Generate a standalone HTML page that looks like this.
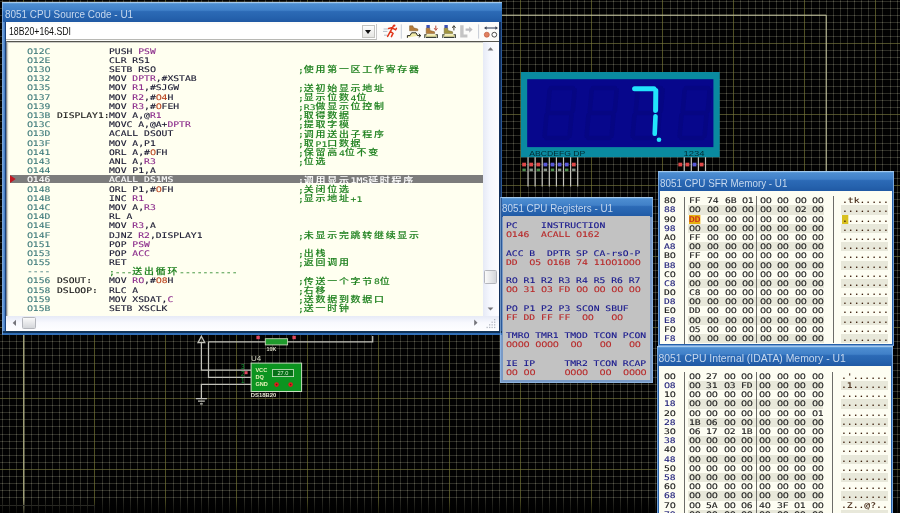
<!DOCTYPE html>
<html lang="zh-CN">
<head>
<meta charset="utf-8">
<title>8051 CPU Source Code - U1</title>
<style>
html,body{margin:0;padding:0;background:#000;}
body{width:900px;height:513px;overflow:hidden;position:relative;font-family:"Liberation Sans","Noto Sans CJK SC",sans-serif;}
#scr{position:absolute;left:0;top:0;width:900px;height:513px;overflow:hidden;}
svg.bg,svg.ov{position:absolute;left:0;top:0;}
svg.ov{z-index:8;}
.win{position:absolute;box-sizing:border-box;background:#2560aa;}
.win:before{content:"";position:absolute;left:0;top:0;right:0;bottom:0;border:0.9px solid rgba(150,190,236,0.7);border-top-color:rgba(170,205,240,0.85);z-index:5;box-sizing:border-box;}
.tb{position:absolute;left:0;right:0;top:0;height:20px;background:linear-gradient(#9cc0e8 0,#62a0da 1.2px,#4c8cd0 2.4px,#4080c8 8.2px,#2c6ab6 9.6px,#2663ae 15px,#2059a4 20px);color:#c6d8ee;font-size:10.4px;line-height:20px;white-space:nowrap;overflow:hidden;}
.tb span{position:absolute;left:2.8px;top:2.7px;transform:scaleX(0.947);transform-origin:0 50%;}
.mono,.ln,.rl,.rv,.mr{font-family:"DejaVu Sans Mono","Liberation Mono","Noto Sans CJK SC",monospace;font-size:7.7px;}
.ln span,.rl,.rv,.mr span{transform:scaleX(1.262);transform-origin:0 50%;-webkit-text-stroke:0.12px currentColor;}
s{font-family:"DejaVu Sans","Liberation Sans",sans-serif;letter-spacing:-0.26px;text-decoration:none;}
/* source window */
#src{left:2px;top:2px;width:499.5px;height:333px;z-index:4;background:linear-gradient(90deg,#2a62ac,#6496d6 1.6px,#3a72bc 3px,#1a4078 3.3px,#1a4078 4.2px,#2e66b0 4.3px,#2e66b0 496px,#c0d4ee 496.9px,#12305c 497.5px,#12305c 498.9px,#2c5a9a 499.5px);}
#src:before{border-right-color:transparent;border-bottom-color:transparent;}
#src:after{content:"";position:absolute;left:0;right:0;bottom:0;height:3.8px;background:linear-gradient(#b8cce6,#123458 0.5px,#123458 2px,#2e6cb6 2.4px,#3674bc);}
#src .tool{position:absolute;left:4px;right:2.4px;top:20px;height:19.6px;background:#fcfcfa;}
#src .combo{position:absolute;left:0;top:1.6px;width:370.4px;height:15.6px;background:#fff;border-bottom:1px solid #b8b8b4;border-right:1px solid #c8c8c8;font-size:10.4px;line-height:16.4px;color:#101010;}
#src .combo span{position:absolute;left:3.4px;top:0;font-size:10.2px;transform:scaleX(0.858);transform-origin:0 50%;}
#src .cbtn{position:absolute;right:1px;top:1.4px;width:13.4px;height:13.4px;background:linear-gradient(#fdfdfd,#e6e6e2);border:1px solid #c4c4c0;box-sizing:border-box;}
#src .cbtn:after{content:"";position:absolute;left:2.2px;top:4.2px;border-left:3.6px solid transparent;border-right:3.6px solid transparent;border-top:4px solid #111;}
#src .codebox{position:absolute;left:4px;top:39.4px;width:476.6px;height:274.8px;background:#fffff0;border-top:1px solid #55554f;border-left:1.5px solid #80848c;box-shadow:inset 1.2px 1px 0 #cdcdc6;box-sizing:border-box;overflow:hidden;}
#code{position:absolute;left:-7.5px;top:-42.4px;width:900px;height:513px;}
.ln{position:absolute;left:0;width:900px;height:9.18px;line-height:9.18px;white-space:pre;color:#16162e;}
.ln span{position:absolute;top:0;}
.ln .a{color:#3e7a7a;}
.ln .l{color:#141414;}
.ln .c{color:#1e801e;}
.ln .c b{position:relative;top:-0.8px;font-weight:500;font-size:7.9px;letter-spacing:1.37px;font-family:"Noto Sans CJK SC","WenQuanYi Zen Hei",sans-serif;}
.ln i{font-style:normal;}
.ln i.r{color:#8a2a8a;}
.ln i.n{color:#b8421c;}
.ln.hl{color:#fff;}
.hlbg{position:absolute;left:10px;top:174.7px;width:480px;height:8.6px;background:#7c7c7c;}
.ln.hl span,.ln.hl .a,.ln.hl .c{color:#fff;}
.mark{position:absolute;left:10px;top:175.3px;width:0;height:0;border-top:3.8px solid transparent;border-bottom:3.8px solid transparent;border-left:5.6px solid #c01822;}
#src .vs{position:absolute;left:480.6px;top:39.4px;width:16.6px;height:274.8px;border-top:1px solid #55554f;box-sizing:border-box;background:linear-gradient(90deg,#e6eaf6,#f6f8fe 45%,#fdfdff);}
#src .hs{position:absolute;left:4px;top:314.2px;width:492.8px;height:15.1px;background:linear-gradient(#e6eaf6,#f8f9fe 45%,#fefeff);}
.thumb{position:absolute;background:linear-gradient(90deg,#fafafa,#d4d6da);border:1px solid #b4b6bc;box-sizing:border-box;border-radius:1.5px;}
.arr{position:absolute;width:0;height:0;}
/* registers */
#reg{left:500.2px;top:196.8px;width:152.6px;height:185.8px;}
#reg{background:#7a9ac6;}
#reg .body{position:absolute;left:2.6px;right:2.6px;top:19.6px;bottom:2.6px;background:#c2c2c2;}
.rl,.rv{position:absolute;left:505.7px;height:9.18px;line-height:9.18px;white-space:pre;}
.rl{color:#16168c;}
.rv{color:#b82828;}
/* memory */
#sfr{left:658.2px;top:171.3px;width:236px;height:175px;}
#ida{left:657.3px;top:346.3px;width:235.9px;height:180px;}
.mbody{position:absolute;left:2.2px;right:2.5px;top:19.8px;bottom:2.6px;background:#fdfdf2;}
.mr{position:absolute;left:0;width:900px;height:9.19px;line-height:9.19px;white-space:pre;color:#1a1a1a;}
.mr span{position:absolute;top:0;}
.mr u{position:absolute;top:0;height:9.19px;background:#e8e8da;text-decoration:none;}
.mr .ad{color:#141414;}
.mr.o .ad{color:#1c1c78;}
.mr .as{color:#3a1c08;}
.mr .hb{background:#e6b010;color:#c82020;}
.mr em{font-style:normal;background:#d8c020;}
.vl{position:absolute;width:1px;background:#6c6c68;z-index:3;}
</style>
</head>
<body>
<div id="scr">
<svg class="bg" width="900" height="513" viewBox="0 0 900 513">
<rect width="900" height="513" fill="#020202"/>
<path d="M2.5 0V513M9.5 0V513M16.5 0V513M31.5 0V513M38.5 0V513M45.5 0V513M52.5 0V513M59.5 0V513M66.5 0V513M73.5 0V513M80.5 0V513M87.5 0V513M102.5 0V513M109.5 0V513M116.5 0V513M123.5 0V513M130.5 0V513M137.5 0V513M144.5 0V513M151.5 0V513M158.5 0V513M173.5 0V513M180.5 0V513M187.5 0V513M194.5 0V513M201.5 0V513M208.5 0V513M215.5 0V513M222.5 0V513M229.5 0V513M244.5 0V513M251.5 0V513M258.5 0V513M265.5 0V513M272.5 0V513M279.5 0V513M286.5 0V513M293.5 0V513M300.5 0V513M314.5 0V513M322.5 0V513M329.5 0V513M336.5 0V513M343.5 0V513M350.5 0V513M357.5 0V513M364.5 0V513M371.5 0V513M385.5 0V513M393.5 0V513M400.5 0V513M407.5 0V513M414.5 0V513M421.5 0V513M428.5 0V513M435.5 0V513M442.5 0V513M456.5 0V513M464.5 0V513M471.5 0V513M478.5 0V513M485.5 0V513M492.5 0V513M499.5 0V513M506.5 0V513M513.5 0V513M528.5 0V513M535.5 0V513M542.5 0V513M549.5 0V513M556.5 0V513M563.5 0V513M570.5 0V513M577.5 0V513M584.5 0V513M599.5 0V513M606.5 0V513M613.5 0V513M620.5 0V513M627.5 0V513M634.5 0V513M641.5 0V513M648.5 0V513M655.5 0V513M670.5 0V513M677.5 0V513M684.5 0V513M691.5 0V513M698.5 0V513M705.5 0V513M712.5 0V513M719.5 0V513M726.5 0V513M740.5 0V513M748.5 0V513M755.5 0V513M762.5 0V513M769.5 0V513M776.5 0V513M783.5 0V513M790.5 0V513M797.5 0V513M811.5 0V513M819.5 0V513M826.5 0V513M833.5 0V513M840.5 0V513M847.5 0V513M854.5 0V513M861.5 0V513M868.5 0V513M882.5 0V513M890.5 0V513M897.5 0V513" stroke="#6e6e5c" stroke-opacity="0.4" stroke-width="1" fill="none"/>
<path d="M0 1.5H900M0 8.5H900M0 15.5H900M0 22.5H900M0 29.5H900M0 36.5H900M0 50.5H900M0 57.5H900M0 64.5H900M0 72.5H900M0 79.5H900M0 86.5H900M0 93.5H900M0 100.5H900M0 107.5H900M0 121.5H900M0 128.5H900M0 135.5H900M0 143.5H900M0 150.5H900M0 157.5H900M0 164.5H900M0 171.5H900M0 178.5H900M0 192.5H900M0 199.5H900M0 206.5H900M0 213.5H900M0 221.5H900M0 228.5H900M0 235.5H900M0 242.5H900M0 249.5H900M0 263.5H900M0 270.5H900M0 277.5H900M0 285.5H900M0 292.5H900M0 299.5H900M0 306.5H900M0 313.5H900M0 320.5H900M0 334.5H900M0 341.5H900M0 348.5H900M0 355.5H900M0 363.5H900M0 370.5H900M0 377.5H900M0 384.5H900M0 391.5H900M0 405.5H900M0 412.5H900M0 419.5H900M0 426.5H900M0 434.5H900M0 441.5H900M0 448.5H900M0 455.5H900M0 462.5H900M0 476.5H900M0 483.5H900M0 490.5H900M0 497.5H900" stroke="#6e6e5c" stroke-opacity="0.4" stroke-width="1" fill="none" style="mix-blend-mode:plus-lighter"/>
<path d="M23.5 0V513M94.5 0V513M165.5 0V513M236.5 0V513M307.5 0V513M378.5 0V513M449.5 0V513M520.5 0V513M591.5 0V513M662.5 0V513M733.5 0V513M804.5 0V513M875.5 0V513" stroke="#80803a" stroke-opacity="0.62" stroke-width="1" fill="none"/>
<path d="M0 43.5H900M0 114.5H900M0 185.5H900M0 256.5H900M0 327.5H900M0 398.5H900M0 469.5H900" stroke="#7c7c40" stroke-opacity="0.62" stroke-width="1" fill="none"/>
<path d="M23.90 513V15.20H826.20V513" stroke="#d0d0a8" stroke-width="1" fill="none"/>
<path d="M0 505.50H94.50V513" stroke="#3c3c34" stroke-width="1" fill="none"/>
<defs><linearGradient id="fd" x1="0" y1="0" x2="0" y2="1"><stop offset="0" stop-color="#000" stop-opacity="0"/><stop offset="1" stop-color="#000" stop-opacity="0.7"/></linearGradient></defs>
<rect x="0" y="499" width="900" height="14" fill="url(#fd)"/>
<rect x="520.90" y="72.00" width="198.80" height="85.20" fill="#0a8aa0"/>
<rect x="527.2" y="79.2" width="186.2" height="67.9" fill="#07078c"/>
<g transform="translate(548,86) skewX(-5)" fill="none" stroke="#060683" stroke-width="4.5" stroke-linecap="round"><path d="M3 2H25M27 4V25M26 29V50M3 52H24M1 29V50M2 4V25M4 27H24"/></g>
<g transform="translate(590,86) skewX(-5)" fill="none" stroke="#060683" stroke-width="4.5" stroke-linecap="round"><path d="M3 2H25M27 4V25M26 29V50M3 52H24M1 29V50M2 4V25M4 27H24"/></g>
<g transform="translate(636,86) skewX(-5)" fill="none" stroke="#060683" stroke-width="4.5" stroke-linecap="round"><path d="M3 2H25M27 4V25M26 29V50M3 52H24M1 29V50M2 4V25M4 27H24"/></g>
<g transform="translate(683,86) skewX(-5)" fill="none" stroke="#060683" stroke-width="4.5" stroke-linecap="round"><path d="M3 2H25M27 4V25M26 29V50M3 52H24M1 29V50M2 4V25M4 27H24"/></g>
<g fill="none" stroke="#22e4fc" stroke-linecap="round" stroke-linejoin="round"><path d="M634.6 88.7H654" stroke-width="5"/><path d="M655.8 90.5L655.6 110.6" stroke-width="5"/><path d="M655.5 116.2L654.7 133.8" stroke-width="4.6"/></g>
<circle cx="659" cy="139.7" r="2.3" fill="#22e4fc"/>
<text x="529.3" y="155.8" font-family="Liberation Sans, sans-serif" font-size="7.2" fill="#012a30" textLength="56" lengthAdjust="spacingAndGlyphs">ABCDEFG  DP</text>
<text x="683.6" y="155.8" font-family="Liberation Sans, sans-serif" font-size="7.2" fill="#012a30" textLength="21" lengthAdjust="spacingAndGlyphs">1234</text>
<path d="M528.00 157.20V186.40" stroke="#c4c4bc" stroke-width="1.2"/>
<rect x="522.20" y="162.7" width="3.8" height="3.7" fill="#e04848"/>
<rect x="522.40" y="168.6" width="3.4" height="2.6" fill="#6cc86c" opacity="0.7"/>
<path d="M535.10 157.20V186.40" stroke="#c4c4bc" stroke-width="1.2"/>
<rect x="529.30" y="162.7" width="3.8" height="3.7" fill="#e04848"/>
<rect x="529.50" y="168.6" width="3.4" height="2.6" fill="#c0d0c0" opacity="0.7"/>
<path d="M542.20 157.20V186.40" stroke="#c4c4bc" stroke-width="1.2"/>
<rect x="536.40" y="162.7" width="3.8" height="3.7" fill="#e04848"/>
<rect x="536.60" y="168.6" width="3.4" height="2.6" fill="#6cc86c" opacity="0.7"/>
<path d="M549.30 157.20V186.40" stroke="#c4c4bc" stroke-width="1.2"/>
<rect x="543.50" y="162.7" width="3.8" height="3.7" fill="#5858d8"/>
<rect x="543.70" y="168.6" width="3.4" height="2.6" fill="#c0d0c0" opacity="0.7"/>
<path d="M556.40 157.20V186.40" stroke="#c4c4bc" stroke-width="1.2"/>
<rect x="550.60" y="162.7" width="3.8" height="3.7" fill="#5858d8"/>
<rect x="550.80" y="168.6" width="3.4" height="2.6" fill="#6cc86c" opacity="0.7"/>
<path d="M563.50 157.20V186.40" stroke="#c4c4bc" stroke-width="1.2"/>
<rect x="557.70" y="162.7" width="3.8" height="3.7" fill="#5858d8"/>
<rect x="557.90" y="168.6" width="3.4" height="2.6" fill="#c0d0c0" opacity="0.7"/>
<path d="M570.60 157.20V186.40" stroke="#c4c4bc" stroke-width="1.2"/>
<rect x="564.80" y="162.7" width="3.8" height="3.7" fill="#5858d8"/>
<rect x="565.00" y="168.6" width="3.4" height="2.6" fill="#6cc86c" opacity="0.7"/>
<path d="M577.70 157.20V186.40" stroke="#c4c4bc" stroke-width="1.2"/>
<rect x="571.90" y="162.7" width="3.8" height="3.7" fill="#e04848"/>
<rect x="572.10" y="168.6" width="3.4" height="2.6" fill="#c0d0c0" opacity="0.7"/>
<path d="M684.20 157.20V186.40" stroke="#c4c4bc" stroke-width="1.2"/>
<rect x="678.40" y="162.7" width="3.8" height="3.7" fill="#e04848"/>
<path d="M691.30 157.20V186.40" stroke="#c4c4bc" stroke-width="1.2"/>
<rect x="685.50" y="162.7" width="3.8" height="3.7" fill="#e04848"/>
<path d="M698.40 157.20V186.40" stroke="#c4c4bc" stroke-width="1.2"/>
<rect x="692.60" y="162.7" width="3.8" height="3.7" fill="#5858d8"/>
<path d="M705.50 157.20V186.40" stroke="#c4c4bc" stroke-width="1.2"/>
<rect x="699.70" y="162.7" width="3.8" height="3.7" fill="#e04848"/>
<g stroke="#c2c2ba" stroke-width="1.25" fill="none">
<path d="M208.50 341.80H265.30M286.60 341.80H372.70V336.00"/>
<path d="M201.40 343.00V370.20H251.10"/>
<path d="M201.40 336.2L204.80 342.6H198.00Z"/>
<path d="M208.50 341.80V377.30H251.10"/>
<path d="M251.10 384.40H201.40V398.60"/>
<path d="M195.90 398.60H206.90M198.00 401.20H204.80M200.00 403.80H202.80"/>
</g>
<rect x="265.30" y="338.70" width="22.30" height="6.2" fill="#1f9a2c" stroke="#c8d8b8" stroke-width="0.9"/>
<rect x="256.4" y="335.8" width="3.4" height="3.4" fill="#e04860"/>
<rect x="292.4" y="335.8" width="3.4" height="3.4" fill="#e04860"/>
<text x="266.5" y="350.6" font-family="Liberation Sans, sans-serif" font-size="5.4" font-weight="bold" fill="#dcdcc8">10K</text>
<text x="251" y="361.2" font-family="Liberation Sans, sans-serif" font-size="8" fill="#d8d8c4">U4</text>
<rect x="251.10" y="363.10" width="50.50" height="28.40" fill="#0c9420" stroke="#c8e0c0" stroke-width="1"/>
<text x="255.4" y="372.1" font-family="Liberation Sans, sans-serif" font-size="5.6" font-weight="bold" fill="#e6f2b8">VCC</text>
<text x="255.4" y="379.0" font-family="Liberation Sans, sans-serif" font-size="5.6" font-weight="bold" fill="#e6f2b8">DQ</text>
<text x="255.4" y="386.3" font-family="Liberation Sans, sans-serif" font-size="5.6" font-weight="bold" fill="#e6f2b8">GND</text>
<rect x="272.4" y="369.6" width="21.2" height="7" fill="#067018" stroke="#d0e8c8" stroke-width="0.8"/>
<text x="277.5" y="375.4" font-family="Liberation Sans, sans-serif" font-size="5.6" fill="#d8f0d0">27.0</text>
<circle cx="276.6" cy="384.6" r="2.3" fill="#e01c1c"/><circle cx="290.6" cy="384.6" r="2.3" fill="#e01c1c"/>
<circle cx="276.6" cy="384.6" r="0.8" fill="#701010"/><circle cx="290.6" cy="384.6" r="0.8" fill="#701010"/>
<text x="241" y="369.0" font-family="Liberation Sans, sans-serif" font-size="6.4" fill="#18a038">3</text>
<text x="241" y="376.0" font-family="Liberation Sans, sans-serif" font-size="6.4" fill="#18a038">2</text>
<text x="241" y="383.4" font-family="Liberation Sans, sans-serif" font-size="6.4" fill="#18a038">1</text>
<rect x="244.6" y="371.2" width="3" height="3" fill="#e04860"/>
<text x="250.8" y="397.4" font-family="Liberation Sans, sans-serif" font-size="5.4" font-weight="bold" fill="#e4e4d0" textLength="25.5" lengthAdjust="spacingAndGlyphs">DS18B20</text>
</svg>

<!-- ============ source window ============ -->
<div class="win" id="src">
  <div class="tb"><span style="transform:scaleX(0.956)">8051 CPU Source Code - U1</span></div>
  <div class="tool">
    <div class="combo"><span>18B20+164.SDI</span><div class="cbtn"></div></div>
  </div>
  <div class="codebox"><div id="code">
<div class="hlbg"></div>
<div class="ln" style="top:46.60px"><span class="a" style="left:27.4px"><s>0</s>12C</span><span class="m" style="left:109.3px">PUSH <i class="r">PSW</i></span></div>
<div class="ln" style="top:55.80px"><span class="a" style="left:27.4px"><s>0</s>12E</span><span class="m" style="left:109.3px">CLR RS1</span></div>
<div class="ln" style="top:64.99px"><span class="a" style="left:27.4px"><s>0</s>13<s>0</s></span><span class="m" style="left:109.3px">SETB RS<s>0</s></span><span class="c" style="left:298.2px">;<b>使用第一区工作寄存器</b></span></div>
<div class="ln" style="top:74.19px"><span class="a" style="left:27.4px"><s>0</s>132</span><span class="m" style="left:109.3px">MOV <i class="r">DPTR</i>,#XSTAB</span></div>
<div class="ln" style="top:83.38px"><span class="a" style="left:27.4px"><s>0</s>135</span><span class="m" style="left:109.3px">MOV <i class="r">R1</i>,#SJGW</span><span class="c" style="left:298.2px">;<b>送初始显示地址</b></span></div>
<div class="ln" style="top:92.58px"><span class="a" style="left:27.4px"><s>0</s>137</span><span class="m" style="left:109.3px">MOV <i class="r">R2</i>,#<i class="n"><s>0</s>4</i>H</span><span class="c" style="left:298.2px">;<b>显示位数</b>4<b>位</b></span></div>
<div class="ln" style="top:101.77px"><span class="a" style="left:27.4px"><s>0</s>139</span><span class="m" style="left:109.3px">MOV <i class="r">R3</i>,#<i class="n"><s>0</s></i>FEH</span><span class="c" style="left:298.2px">;R3<b>做显示位控制</b></span></div>
<div class="ln" style="top:110.97px"><span class="a" style="left:27.4px"><s>0</s>13B</span><span class="l" style="left:57.2px">DISPLAY1:</span><span class="m" style="left:109.3px">MOV A,@<i class="r">R1</i></span><span class="c" style="left:298.2px">;<b>取得数据</b></span></div>
<div class="ln" style="top:120.16px"><span class="a" style="left:27.4px"><s>0</s>13C</span><span class="m" style="left:109.3px">MOVC A,@A+<i class="r">DPTR</i></span><span class="c" style="left:298.2px">;<b>提取字模</b></span></div>
<div class="ln" style="top:129.36px"><span class="a" style="left:27.4px"><s>0</s>13D</span><span class="m" style="left:109.3px">ACALL DSOUT</span><span class="c" style="left:298.2px">;<b>调用送出子程序</b></span></div>
<div class="ln" style="top:138.55px"><span class="a" style="left:27.4px"><s>0</s>13F</span><span class="m" style="left:109.3px">MOV A,P1</span><span class="c" style="left:298.2px">;<b>取</b>P1<b>口数据</b></span></div>
<div class="ln" style="top:147.75px"><span class="a" style="left:27.4px"><s>0</s>141</span><span class="m" style="left:109.3px">ORL A,#<i class="n"><s>0</s></i>FH</span><span class="c" style="left:298.2px">;<b>保留高</b>4<b>位不变</b></span></div>
<div class="ln" style="top:156.94px"><span class="a" style="left:27.4px"><s>0</s>143</span><span class="m" style="left:109.3px">ANL A,<i class="r">R3</i></span><span class="c" style="left:298.2px">;<b>位选</b></span></div>
<div class="ln" style="top:166.14px"><span class="a" style="left:27.4px"><s>0</s>144</span><span class="m" style="left:109.3px">MOV P1,A</span></div>
<div class="ln hl" style="top:175.33px"><span class="a" style="left:27.4px"><s>0</s>146</span><span class="m" style="left:109.3px">ACALL DS1MS</span><span class="c" style="left:298.2px">;<b>调用显示</b>1MS<b>延时程序</b></span></div>
<div class="ln" style="top:184.53px"><span class="a" style="left:27.4px"><s>0</s>148</span><span class="m" style="left:109.3px">ORL P1,#<i class="n"><s>0</s></i>FH</span><span class="c" style="left:298.2px">;<b>关闭位选</b></span></div>
<div class="ln" style="top:193.72px"><span class="a" style="left:27.4px"><s>0</s>14B</span><span class="m" style="left:109.3px">INC <i class="r">R1</i></span><span class="c" style="left:298.2px">;<b>显示地址</b>+1</span></div>
<div class="ln" style="top:202.92px"><span class="a" style="left:27.4px"><s>0</s>14C</span><span class="m" style="left:109.3px">MOV A,<i class="r">R3</i></span></div>
<div class="ln" style="top:212.11px"><span class="a" style="left:27.4px"><s>0</s>14D</span><span class="m" style="left:109.3px">RL A</span></div>
<div class="ln" style="top:221.31px"><span class="a" style="left:27.4px"><s>0</s>14E</span><span class="m" style="left:109.3px">MOV <i class="r">R3</i>,A</span></div>
<div class="ln" style="top:230.50px"><span class="a" style="left:27.4px"><s>0</s>14F</span><span class="m" style="left:109.3px">DJNZ <i class="r">R2</i>,DISPLAY1</span><span class="c" style="left:298.2px">;<b>未显示完跳转继续显示</b></span></div>
<div class="ln" style="top:239.70px"><span class="a" style="left:27.4px"><s>0</s>151</span><span class="m" style="left:109.3px">POP <i class="r">PSW</i></span></div>
<div class="ln" style="top:248.89px"><span class="a" style="left:27.4px"><s>0</s>153</span><span class="m" style="left:109.3px">POP <i class="r">ACC</i></span><span class="c" style="left:298.2px">;<b>出栈</b></span></div>
<div class="ln" style="top:258.09px"><span class="a" style="left:27.4px"><s>0</s>155</span><span class="m" style="left:109.3px">RET</span><span class="c" style="left:298.2px">;<b>返回调用</b></span></div>
<div class="ln" style="top:267.28px"><span class="a" style="left:27.4px">----</span><span class="c" style="left:109.3px">;---<b>送出循环</b>----------</span></div>
<div class="ln" style="top:276.48px"><span class="a" style="left:27.4px"><s>0</s>156</span><span class="l" style="left:57.2px">DSOUT:</span><span class="m" style="left:109.3px">MOV <i class="r">R<s>0</s></i>,#<i class="n"><s>0</s>8</i>H</span><span class="c" style="left:298.2px">;<b>传送一个字节</b>8<b>位</b></span></div>
<div class="ln" style="top:285.67px"><span class="a" style="left:27.4px"><s>0</s>158</span><span class="l" style="left:57.2px">DSLOOP:</span><span class="m" style="left:109.3px">RLC A</span><span class="c" style="left:298.2px">;<b>右移</b></span></div>
<div class="ln" style="top:294.87px"><span class="a" style="left:27.4px"><s>0</s>159</span><span class="m" style="left:109.3px">MOV XSDAT,<i class="r">C</i></span><span class="c" style="left:298.2px">;<b>送数据到数据口</b></span></div>
<div class="ln" style="top:304.06px"><span class="a" style="left:27.4px"><s>0</s>15B</span><span class="m" style="left:109.3px">SETB XSCLK</span><span class="c" style="left:298.2px">;<b>送一时钟</b></span></div>
  </div></div>
  <div class="vs">
        <div class="thumb" style="left:1.4px;top:227.6px;width:12.8px;height:13.8px;"></div>
  </div>
  <div class="hs">
    <div class="thumb" style="left:15.8px;top:0.9px;width:13.8px;height:12.4px;background:linear-gradient(#fafafa,#d4d6da);"></div>
  </div>
</div>

<svg class="ov" width="900" height="513" viewBox="0 0 900 513">
<path d="M10 175.3L15.7 179.1L10 182.9Z" fill="#c01822"/>
<!-- running man -->
<g stroke-linecap="round" fill="none">
<path d="M384 29H388M383.4 31.4H387M384.4 35.2H387" stroke="#b4bcc8" stroke-width="1"/>
<path d="M393.6 25.6L390.4 31.4L387.6 36.4M390.4 31.4L393 33.4L391.4 36.6M392.6 27.6L388.6 28.4M392.4 28L395.6 29.8L396.4 28.4" stroke="#e03418" stroke-width="1.5"/>
<circle cx="394.4" cy="25.6" r="1.1" fill="#e03418" stroke="none"/>
</g>
<path d="M401.3 24.4V38.6M478.6 24.4V38.6" stroke="#c6ccd6" stroke-width="1"/>
<!-- step over -->
<path d="M409.6 25.8H412.8L413.6 27.8L417.8 29V30.8H409.6Z" fill="#b47c3a" stroke="#7a5424" stroke-width="0.5"/>
<path d="M407.6 37.6V35.6H410L411.6 33H416L417.6 35.6H420.4" fill="#f0eaa8" stroke="none"/>
<path d="M407.4 37.8V35.6H410L411.6 32.8H416L417.6 35.6H420.6M418.8 33.8L420.8 35.6L418.8 37.4" fill="none" stroke="#2a2a20" stroke-width="1"/>
<!-- step into -->
<rect x="426.4" y="25" width="3.4" height="3.2" fill="#3c50b4"/>
<path d="M426.2 28.2H429.8V30.4L434.6 31.8V33.6H426.2Z" fill="#b47c3a" stroke="#7a5424" stroke-width="0.5"/>
<path d="M435.8 25.6V29.6M434.2 28.2L435.8 30.4L437.4 28.2" fill="none" stroke="#b84a3a" stroke-width="1"/>
<rect x="425.2" y="34.4" width="11.6" height="2.6" fill="#f0eaa8"/>
<path d="M424.8 38V34.8H426.6M437.4 38V34.8H435.6M426 37.4H436.4" fill="none" stroke="#3a4038" stroke-width="1.1"/>
<!-- step out -->
<rect x="444.4" y="25" width="3.4" height="3.2" fill="#3c50b4"/>
<path d="M444.2 28.2H447.8V30.4L452.6 31.8V33.6H444.2Z" fill="#a09440" stroke="#6a6224" stroke-width="0.5"/>
<path d="M453.9 30.4V26.2M452.3 27.8L453.9 25.6L455.5 27.8" fill="none" stroke="#3a3a30" stroke-width="1"/>
<rect x="443.2" y="34.4" width="11.6" height="2.6" fill="#f0eaa8"/>
<path d="M442.8 38V34.8H444.6M455.4 38V34.8H453.6M444 37.4H454.4" fill="none" stroke="#3a4038" stroke-width="1.1"/>
<!-- disabled run-to -->
<path d="M460.2 25.2H463.6V34.6H467.4V37.4H460.2Z" fill="#c4c4c4"/>
<path d="M465.6 28.4H469.2V26.4L472.6 29.6L469.2 32.8V30.8H465.6Z" fill="#bcbcc0"/>
<!-- breakpoints -->
<path d="M485.6 28H496.4" stroke="#56627a" stroke-width="1.3"/>
<path d="M484 28L486.6 26.2V29.8ZM498 28L495.4 26.2V29.8Z" fill="#384050"/>
<circle cx="486.8" cy="34.7" r="2.5" fill="#e08060" stroke="#c05838" stroke-width="0.7"/>
<circle cx="494.3" cy="34.7" r="2.4" fill="#fdfdfd" stroke="#3a3a3a" stroke-width="0.9"/>
<!-- scroll arrows -->
<g fill="#74747a">
<path d="M487.6 50.4H493.4L490.5 47.2Z"/>
<path d="M487.6 307.4H493.4L490.5 310.6Z"/>
<path d="M16 319.8V326L12.7 322.9Z"/>
<path d="M474.2 319.6V325.8L477.5 322.7Z"/>
</g>
<!-- size grip -->
<g fill="#b4b8c2"><rect x="494.0" y="319.0" width="1.3" height="1.3"/><rect x="494.0" y="321.6" width="1.3" height="1.3"/><rect x="491.5" y="321.6" width="1.3" height="1.3"/><rect x="494.0" y="324.2" width="1.3" height="1.3"/><rect x="491.5" y="324.2" width="1.3" height="1.3"/><rect x="489.0" y="324.2" width="1.3" height="1.3"/><rect x="494.0" y="326.8" width="1.3" height="1.3"/><rect x="491.5" y="326.8" width="1.3" height="1.3"/><rect x="489.0" y="326.8" width="1.3" height="1.3"/><rect x="486.5" y="326.8" width="1.3" height="1.3"/></g>
</svg>


<!-- ============ registers ============ -->
<div class="win" id="reg">
  <div class="tb"><span style="left:1.6px">8051 CPU Registers - U1</span></div>
  <div class="body"></div>
</div>
<div class="rl" style="top:221.10px">PC    INSTRUCTION</div>
<div class="rv" style="top:230.20px"><s>0</s>146  ACALL <s>0</s>162</div>
<div class="rl" style="top:248.60px">ACC B  DPTR SP CA-rsO-P</div>
<div class="rv" style="top:257.70px">DD  <s>0</s>5 <s>0</s>16B 74 11<s>0</s><s>0</s>1<s>0</s><s>0</s><s>0</s></div>
<div class="rl" style="top:276.10px">R<s>0</s> R1 R2 R3 R4 R5 R6 R7</div>
<div class="rv" style="top:285.20px"><s>0</s><s>0</s> 31 <s>0</s>3 FD <s>0</s><s>0</s> <s>0</s><s>0</s> <s>0</s><s>0</s> <s>0</s><s>0</s></div>
<div class="rl" style="top:303.60px">P<s>0</s> P1 P2 P3 SCON SBUF</div>
<div class="rv" style="top:312.70px">FF DD FF FF  <s>0</s><s>0</s>   <s>0</s><s>0</s></div>
<div class="rl" style="top:331.10px">TMR<s>0</s> TMR1 TMOD TCON PCON</div>
<div class="rv" style="top:340.20px"><s>0</s><s>0</s><s>0</s><s>0</s> <s>0</s><s>0</s><s>0</s><s>0</s>  <s>0</s><s>0</s>   <s>0</s><s>0</s>   <s>0</s><s>0</s></div>
<div class="rl" style="top:358.60px">IE IP     TMR2 TCON RCAP</div>
<div class="rv" style="top:367.70px"><s>0</s><s>0</s> <s>0</s><s>0</s>     <s>0</s><s>0</s><s>0</s><s>0</s>  <s>0</s><s>0</s>  <s>0</s><s>0</s><s>0</s><s>0</s></div>

<!-- ============ SFR ============ -->
<div class="win" id="sfr">
  <div class="tb"><span style="left:1.7px">8051 CPU SFR Memory - U1</span></div>
  <div class="mbody"></div>
</div>
<div class="vl" style="left:684.2px;top:196.8px;height:147px"></div>
<div class="vl" style="left:756.4px;top:196.4px;height:147px"></div>
<div class="vl" style="left:832.8px;top:196.4px;height:147px"></div>
<div class="mr" style="top:196.20px"><span class="ad" style="left:664.3px">8<s>0</s></span><span style="left:689.4px">FF</span><span style="left:706.9px">74</span><span style="left:724.5px">6B</span><span style="left:742.0px"><s>0</s>1</span><span style="left:759.6px"><s>0</s><s>0</s></span><span style="left:777.1px"><s>0</s><s>0</s></span><span style="left:794.7px"><s>0</s><s>0</s></span><span style="left:812.2px"><s>0</s><s>0</s></span><span class="as" style="left:841.8px">.tk.....</span></div>
<div class="mr o" style="top:205.39px"><u style="left:688.2px;width:135.6px"></u><u style="left:841.2px;width:47px"></u><span class="ad" style="left:664.3px">88</span><span style="left:689.4px"><s>0</s><s>0</s></span><span style="left:706.9px"><s>0</s><s>0</s></span><span style="left:724.5px"><s>0</s><s>0</s></span><span style="left:742.0px"><s>0</s><s>0</s></span><span style="left:759.6px"><s>0</s><s>0</s></span><span style="left:777.1px"><s>0</s><s>0</s></span><span style="left:794.7px"><s>0</s>2</span><span style="left:812.2px"><s>0</s><s>0</s></span><span class="as" style="left:841.8px">........</span></div>
<div class="mr" style="top:214.58px"><span class="ad" style="left:664.3px">9<s>0</s></span><span class="hb" style="left:689.4px">DD</span><span style="left:706.9px"><s>0</s><s>0</s></span><span style="left:724.5px"><s>0</s><s>0</s></span><span style="left:742.0px"><s>0</s><s>0</s></span><span style="left:759.6px"><s>0</s><s>0</s></span><span style="left:777.1px"><s>0</s><s>0</s></span><span style="left:794.7px"><s>0</s><s>0</s></span><span style="left:812.2px"><s>0</s><s>0</s></span><span class="as" style="left:841.8px"><em>.</em>.......</span></div>
<div class="mr o" style="top:223.77px"><u style="left:688.2px;width:135.6px"></u><u style="left:841.2px;width:47px"></u><span class="ad" style="left:664.3px">98</span><span style="left:689.4px"><s>0</s><s>0</s></span><span style="left:706.9px"><s>0</s><s>0</s></span><span style="left:724.5px"><s>0</s><s>0</s></span><span style="left:742.0px"><s>0</s><s>0</s></span><span style="left:759.6px"><s>0</s><s>0</s></span><span style="left:777.1px"><s>0</s><s>0</s></span><span style="left:794.7px"><s>0</s><s>0</s></span><span style="left:812.2px"><s>0</s><s>0</s></span><span class="as" style="left:841.8px">........</span></div>
<div class="mr" style="top:232.96px"><span class="ad" style="left:664.3px">A<s>0</s></span><span style="left:689.4px">FF</span><span style="left:706.9px"><s>0</s><s>0</s></span><span style="left:724.5px"><s>0</s><s>0</s></span><span style="left:742.0px"><s>0</s><s>0</s></span><span style="left:759.6px"><s>0</s><s>0</s></span><span style="left:777.1px"><s>0</s><s>0</s></span><span style="left:794.7px"><s>0</s><s>0</s></span><span style="left:812.2px"><s>0</s><s>0</s></span><span class="as" style="left:841.8px">........</span></div>
<div class="mr o" style="top:242.15px"><u style="left:688.2px;width:135.6px"></u><u style="left:841.2px;width:47px"></u><span class="ad" style="left:664.3px">A8</span><span style="left:689.4px"><s>0</s><s>0</s></span><span style="left:706.9px"><s>0</s><s>0</s></span><span style="left:724.5px"><s>0</s><s>0</s></span><span style="left:742.0px"><s>0</s><s>0</s></span><span style="left:759.6px"><s>0</s><s>0</s></span><span style="left:777.1px"><s>0</s><s>0</s></span><span style="left:794.7px"><s>0</s><s>0</s></span><span style="left:812.2px"><s>0</s><s>0</s></span><span class="as" style="left:841.8px">........</span></div>
<div class="mr" style="top:251.34px"><span class="ad" style="left:664.3px">B<s>0</s></span><span style="left:689.4px">FF</span><span style="left:706.9px"><s>0</s><s>0</s></span><span style="left:724.5px"><s>0</s><s>0</s></span><span style="left:742.0px"><s>0</s><s>0</s></span><span style="left:759.6px"><s>0</s><s>0</s></span><span style="left:777.1px"><s>0</s><s>0</s></span><span style="left:794.7px"><s>0</s><s>0</s></span><span style="left:812.2px"><s>0</s><s>0</s></span><span class="as" style="left:841.8px">........</span></div>
<div class="mr o" style="top:260.53px"><u style="left:688.2px;width:135.6px"></u><u style="left:841.2px;width:47px"></u><span class="ad" style="left:664.3px">B8</span><span style="left:689.4px"><s>0</s><s>0</s></span><span style="left:706.9px"><s>0</s><s>0</s></span><span style="left:724.5px"><s>0</s><s>0</s></span><span style="left:742.0px"><s>0</s><s>0</s></span><span style="left:759.6px"><s>0</s><s>0</s></span><span style="left:777.1px"><s>0</s><s>0</s></span><span style="left:794.7px"><s>0</s><s>0</s></span><span style="left:812.2px"><s>0</s><s>0</s></span><span class="as" style="left:841.8px">........</span></div>
<div class="mr" style="top:269.72px"><span class="ad" style="left:664.3px">C<s>0</s></span><span style="left:689.4px"><s>0</s><s>0</s></span><span style="left:706.9px"><s>0</s><s>0</s></span><span style="left:724.5px"><s>0</s><s>0</s></span><span style="left:742.0px"><s>0</s><s>0</s></span><span style="left:759.6px"><s>0</s><s>0</s></span><span style="left:777.1px"><s>0</s><s>0</s></span><span style="left:794.7px"><s>0</s><s>0</s></span><span style="left:812.2px"><s>0</s><s>0</s></span><span class="as" style="left:841.8px">........</span></div>
<div class="mr o" style="top:278.91px"><u style="left:688.2px;width:135.6px"></u><u style="left:841.2px;width:47px"></u><span class="ad" style="left:664.3px">C8</span><span style="left:689.4px"><s>0</s><s>0</s></span><span style="left:706.9px"><s>0</s><s>0</s></span><span style="left:724.5px"><s>0</s><s>0</s></span><span style="left:742.0px"><s>0</s><s>0</s></span><span style="left:759.6px"><s>0</s><s>0</s></span><span style="left:777.1px"><s>0</s><s>0</s></span><span style="left:794.7px"><s>0</s><s>0</s></span><span style="left:812.2px"><s>0</s><s>0</s></span><span class="as" style="left:841.8px">........</span></div>
<div class="mr" style="top:288.10px"><span class="ad" style="left:664.3px">D<s>0</s></span><span style="left:689.4px">C8</span><span style="left:706.9px"><s>0</s><s>0</s></span><span style="left:724.5px"><s>0</s><s>0</s></span><span style="left:742.0px"><s>0</s><s>0</s></span><span style="left:759.6px"><s>0</s><s>0</s></span><span style="left:777.1px"><s>0</s><s>0</s></span><span style="left:794.7px"><s>0</s><s>0</s></span><span style="left:812.2px"><s>0</s><s>0</s></span><span class="as" style="left:841.8px">........</span></div>
<div class="mr o" style="top:297.29px"><u style="left:688.2px;width:135.6px"></u><u style="left:841.2px;width:47px"></u><span class="ad" style="left:664.3px">D8</span><span style="left:689.4px"><s>0</s><s>0</s></span><span style="left:706.9px"><s>0</s><s>0</s></span><span style="left:724.5px"><s>0</s><s>0</s></span><span style="left:742.0px"><s>0</s><s>0</s></span><span style="left:759.6px"><s>0</s><s>0</s></span><span style="left:777.1px"><s>0</s><s>0</s></span><span style="left:794.7px"><s>0</s><s>0</s></span><span style="left:812.2px"><s>0</s><s>0</s></span><span class="as" style="left:841.8px">........</span></div>
<div class="mr" style="top:306.48px"><span class="ad" style="left:664.3px">E<s>0</s></span><span style="left:689.4px">DD</span><span style="left:706.9px"><s>0</s><s>0</s></span><span style="left:724.5px"><s>0</s><s>0</s></span><span style="left:742.0px"><s>0</s><s>0</s></span><span style="left:759.6px"><s>0</s><s>0</s></span><span style="left:777.1px"><s>0</s><s>0</s></span><span style="left:794.7px"><s>0</s><s>0</s></span><span style="left:812.2px"><s>0</s><s>0</s></span><span class="as" style="left:841.8px">........</span></div>
<div class="mr o" style="top:315.67px"><u style="left:688.2px;width:135.6px"></u><u style="left:841.2px;width:47px"></u><span class="ad" style="left:664.3px">E8</span><span style="left:689.4px"><s>0</s><s>0</s></span><span style="left:706.9px"><s>0</s><s>0</s></span><span style="left:724.5px"><s>0</s><s>0</s></span><span style="left:742.0px"><s>0</s><s>0</s></span><span style="left:759.6px"><s>0</s><s>0</s></span><span style="left:777.1px"><s>0</s><s>0</s></span><span style="left:794.7px"><s>0</s><s>0</s></span><span style="left:812.2px"><s>0</s><s>0</s></span><span class="as" style="left:841.8px">........</span></div>
<div class="mr" style="top:324.86px"><span class="ad" style="left:664.3px">F<s>0</s></span><span style="left:689.4px"><s>0</s>5</span><span style="left:706.9px"><s>0</s><s>0</s></span><span style="left:724.5px"><s>0</s><s>0</s></span><span style="left:742.0px"><s>0</s><s>0</s></span><span style="left:759.6px"><s>0</s><s>0</s></span><span style="left:777.1px"><s>0</s><s>0</s></span><span style="left:794.7px"><s>0</s><s>0</s></span><span style="left:812.2px"><s>0</s><s>0</s></span><span class="as" style="left:841.8px">........</span></div>
<div class="mr o" style="top:334.05px"><u style="left:688.2px;width:135.6px"></u><u style="left:841.2px;width:47px"></u><span class="ad" style="left:664.3px">F8</span><span style="left:689.4px"><s>0</s><s>0</s></span><span style="left:706.9px"><s>0</s><s>0</s></span><span style="left:724.5px"><s>0</s><s>0</s></span><span style="left:742.0px"><s>0</s><s>0</s></span><span style="left:759.6px"><s>0</s><s>0</s></span><span style="left:777.1px"><s>0</s><s>0</s></span><span style="left:794.7px"><s>0</s><s>0</s></span><span style="left:812.2px"><s>0</s><s>0</s></span><span class="as" style="left:841.8px">........</span></div>

<!-- ============ IDATA ============ -->
<div class="win" id="ida">
  <div class="tb"><span style="left:1.2px;transform:scaleX(1)">8051 CPU Internal (IDATA) Memory - U1</span></div>
  <div class="mbody"></div>
</div>
<div class="vl" style="left:683.6px;top:371.6px;height:150px"></div>
<div class="vl" style="left:755.8px;top:371.6px;height:150px"></div>
<div class="vl" style="left:832.2px;top:371.6px;height:150px"></div>
<div class="mr" style="top:371.90px"><span class="ad" style="left:663.7px"><s>0</s><s>0</s></span><span style="left:688.8px"><s>0</s><s>0</s></span><span style="left:706.3px">27</span><span style="left:723.9px"><s>0</s><s>0</s></span><span style="left:741.4px"><s>0</s><s>0</s></span><span style="left:759.0px"><s>0</s><s>0</s></span><span style="left:776.5px"><s>0</s><s>0</s></span><span style="left:794.1px"><s>0</s><s>0</s></span><span style="left:811.6px"><s>0</s><s>0</s></span><span class="as" style="left:841.2px">.&#x27;......</span></div>
<div class="mr o" style="top:381.09px"><u style="left:687.6px;width:135.6px"></u><u style="left:840.6px;width:47px"></u><span class="ad" style="left:663.7px"><s>0</s>8</span><span style="left:688.8px"><s>0</s><s>0</s></span><span style="left:706.3px">31</span><span style="left:723.9px"><s>0</s>3</span><span style="left:741.4px">FD</span><span style="left:759.0px"><s>0</s><s>0</s></span><span style="left:776.5px"><s>0</s><s>0</s></span><span style="left:794.1px"><s>0</s><s>0</s></span><span style="left:811.6px"><s>0</s><s>0</s></span><span class="as" style="left:841.2px">.1......</span></div>
<div class="mr" style="top:390.28px"><span class="ad" style="left:663.7px">1<s>0</s></span><span style="left:688.8px"><s>0</s><s>0</s></span><span style="left:706.3px"><s>0</s><s>0</s></span><span style="left:723.9px"><s>0</s><s>0</s></span><span style="left:741.4px"><s>0</s><s>0</s></span><span style="left:759.0px"><s>0</s><s>0</s></span><span style="left:776.5px"><s>0</s><s>0</s></span><span style="left:794.1px"><s>0</s><s>0</s></span><span style="left:811.6px"><s>0</s><s>0</s></span><span class="as" style="left:841.2px">........</span></div>
<div class="mr o" style="top:399.47px"><u style="left:687.6px;width:135.6px"></u><u style="left:840.6px;width:47px"></u><span class="ad" style="left:663.7px">18</span><span style="left:688.8px"><s>0</s><s>0</s></span><span style="left:706.3px"><s>0</s><s>0</s></span><span style="left:723.9px"><s>0</s><s>0</s></span><span style="left:741.4px"><s>0</s><s>0</s></span><span style="left:759.0px"><s>0</s><s>0</s></span><span style="left:776.5px"><s>0</s><s>0</s></span><span style="left:794.1px"><s>0</s><s>0</s></span><span style="left:811.6px"><s>0</s><s>0</s></span><span class="as" style="left:841.2px">........</span></div>
<div class="mr" style="top:408.66px"><span class="ad" style="left:663.7px">2<s>0</s></span><span style="left:688.8px"><s>0</s><s>0</s></span><span style="left:706.3px"><s>0</s><s>0</s></span><span style="left:723.9px"><s>0</s><s>0</s></span><span style="left:741.4px"><s>0</s><s>0</s></span><span style="left:759.0px"><s>0</s><s>0</s></span><span style="left:776.5px"><s>0</s><s>0</s></span><span style="left:794.1px"><s>0</s><s>0</s></span><span style="left:811.6px"><s>0</s>1</span><span class="as" style="left:841.2px">........</span></div>
<div class="mr o" style="top:417.85px"><u style="left:687.6px;width:135.6px"></u><u style="left:840.6px;width:47px"></u><span class="ad" style="left:663.7px">28</span><span style="left:688.8px">1B</span><span style="left:706.3px"><s>0</s>6</span><span style="left:723.9px"><s>0</s><s>0</s></span><span style="left:741.4px"><s>0</s><s>0</s></span><span style="left:759.0px"><s>0</s><s>0</s></span><span style="left:776.5px"><s>0</s><s>0</s></span><span style="left:794.1px"><s>0</s><s>0</s></span><span style="left:811.6px"><s>0</s><s>0</s></span><span class="as" style="left:841.2px">........</span></div>
<div class="mr" style="top:427.04px"><span class="ad" style="left:663.7px">3<s>0</s></span><span style="left:688.8px"><s>0</s>6</span><span style="left:706.3px">17</span><span style="left:723.9px"><s>0</s>2</span><span style="left:741.4px">1B</span><span style="left:759.0px"><s>0</s><s>0</s></span><span style="left:776.5px"><s>0</s><s>0</s></span><span style="left:794.1px"><s>0</s><s>0</s></span><span style="left:811.6px"><s>0</s><s>0</s></span><span class="as" style="left:841.2px">........</span></div>
<div class="mr o" style="top:436.23px"><u style="left:687.6px;width:135.6px"></u><u style="left:840.6px;width:47px"></u><span class="ad" style="left:663.7px">38</span><span style="left:688.8px"><s>0</s><s>0</s></span><span style="left:706.3px"><s>0</s><s>0</s></span><span style="left:723.9px"><s>0</s><s>0</s></span><span style="left:741.4px"><s>0</s><s>0</s></span><span style="left:759.0px"><s>0</s><s>0</s></span><span style="left:776.5px"><s>0</s><s>0</s></span><span style="left:794.1px"><s>0</s><s>0</s></span><span style="left:811.6px"><s>0</s><s>0</s></span><span class="as" style="left:841.2px">........</span></div>
<div class="mr" style="top:445.42px"><span class="ad" style="left:663.7px">4<s>0</s></span><span style="left:688.8px"><s>0</s><s>0</s></span><span style="left:706.3px"><s>0</s><s>0</s></span><span style="left:723.9px"><s>0</s><s>0</s></span><span style="left:741.4px"><s>0</s><s>0</s></span><span style="left:759.0px"><s>0</s><s>0</s></span><span style="left:776.5px"><s>0</s><s>0</s></span><span style="left:794.1px"><s>0</s><s>0</s></span><span style="left:811.6px"><s>0</s><s>0</s></span><span class="as" style="left:841.2px">........</span></div>
<div class="mr o" style="top:454.61px"><u style="left:687.6px;width:135.6px"></u><u style="left:840.6px;width:47px"></u><span class="ad" style="left:663.7px">48</span><span style="left:688.8px"><s>0</s><s>0</s></span><span style="left:706.3px"><s>0</s><s>0</s></span><span style="left:723.9px"><s>0</s><s>0</s></span><span style="left:741.4px"><s>0</s><s>0</s></span><span style="left:759.0px"><s>0</s><s>0</s></span><span style="left:776.5px"><s>0</s><s>0</s></span><span style="left:794.1px"><s>0</s><s>0</s></span><span style="left:811.6px"><s>0</s><s>0</s></span><span class="as" style="left:841.2px">........</span></div>
<div class="mr" style="top:463.80px"><span class="ad" style="left:663.7px">5<s>0</s></span><span style="left:688.8px"><s>0</s><s>0</s></span><span style="left:706.3px"><s>0</s><s>0</s></span><span style="left:723.9px"><s>0</s><s>0</s></span><span style="left:741.4px"><s>0</s><s>0</s></span><span style="left:759.0px"><s>0</s><s>0</s></span><span style="left:776.5px"><s>0</s><s>0</s></span><span style="left:794.1px"><s>0</s><s>0</s></span><span style="left:811.6px"><s>0</s><s>0</s></span><span class="as" style="left:841.2px">........</span></div>
<div class="mr o" style="top:472.99px"><u style="left:687.6px;width:135.6px"></u><u style="left:840.6px;width:47px"></u><span class="ad" style="left:663.7px">58</span><span style="left:688.8px"><s>0</s><s>0</s></span><span style="left:706.3px"><s>0</s><s>0</s></span><span style="left:723.9px"><s>0</s><s>0</s></span><span style="left:741.4px"><s>0</s><s>0</s></span><span style="left:759.0px"><s>0</s><s>0</s></span><span style="left:776.5px"><s>0</s><s>0</s></span><span style="left:794.1px"><s>0</s><s>0</s></span><span style="left:811.6px"><s>0</s><s>0</s></span><span class="as" style="left:841.2px">........</span></div>
<div class="mr" style="top:482.18px"><span class="ad" style="left:663.7px">6<s>0</s></span><span style="left:688.8px"><s>0</s><s>0</s></span><span style="left:706.3px"><s>0</s><s>0</s></span><span style="left:723.9px"><s>0</s><s>0</s></span><span style="left:741.4px"><s>0</s><s>0</s></span><span style="left:759.0px"><s>0</s><s>0</s></span><span style="left:776.5px"><s>0</s><s>0</s></span><span style="left:794.1px"><s>0</s><s>0</s></span><span style="left:811.6px"><s>0</s><s>0</s></span><span class="as" style="left:841.2px">........</span></div>
<div class="mr o" style="top:491.37px"><u style="left:687.6px;width:135.6px"></u><u style="left:840.6px;width:47px"></u><span class="ad" style="left:663.7px">68</span><span style="left:688.8px"><s>0</s><s>0</s></span><span style="left:706.3px"><s>0</s><s>0</s></span><span style="left:723.9px"><s>0</s><s>0</s></span><span style="left:741.4px"><s>0</s><s>0</s></span><span style="left:759.0px"><s>0</s><s>0</s></span><span style="left:776.5px"><s>0</s><s>0</s></span><span style="left:794.1px"><s>0</s><s>0</s></span><span style="left:811.6px"><s>0</s><s>0</s></span><span class="as" style="left:841.2px">........</span></div>
<div class="mr" style="top:500.56px"><span class="ad" style="left:663.7px">7<s>0</s></span><span style="left:688.8px"><s>0</s><s>0</s></span><span style="left:706.3px">5A</span><span style="left:723.9px"><s>0</s><s>0</s></span><span style="left:741.4px"><s>0</s>6</span><span style="left:759.0px">4<s>0</s></span><span style="left:776.5px">3F</span><span style="left:794.1px"><s>0</s>1</span><span style="left:811.6px"><s>0</s><s>0</s></span><span class="as" style="left:841.2px">.Z..@?..</span></div>
<div class="mr o" style="top:509.75px"><u style="left:687.6px;width:135.6px"></u><u style="left:840.6px;width:47px"></u><span class="ad" style="left:663.7px">78</span><span style="left:688.8px"><s>0</s><s>0</s></span><span style="left:706.3px"><s>0</s><s>0</s></span><span style="left:723.9px"><s>0</s><s>0</s></span><span style="left:741.4px"><s>0</s><s>0</s></span><span style="left:759.0px"><s>0</s><s>0</s></span><span style="left:776.5px"><s>0</s><s>0</s></span><span style="left:794.1px"><s>0</s><s>0</s></span><span style="left:811.6px"><s>0</s><s>0</s></span><span class="as" style="left:841.2px">........</span></div>
</div>
</body>
</html>
